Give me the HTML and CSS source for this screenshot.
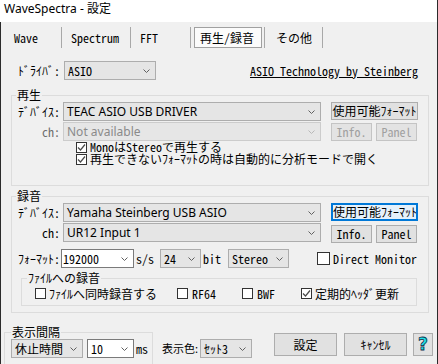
FILE: index.html
```html
<!DOCTYPE html>
<html lang="ja">
<head>
<meta charset="utf-8">
<title>WaveSpectra - 設定</title>
<link rel="stylesheet" href="styles.css">
</head>
<body>
<div class="titlebar">WaveSpectra - 設定</div>
<div class="main">
  <div class="tabs">
    <span class="tab t-wave">Wave</span><span class="sep"></span>
    <span class="tab t-spec">Spectrum</span><span class="sep"></span>
    <span class="tab t-fft">FFT</span><span class="sep"></span>
    <span class="tab t-rec">再生/録音</span><span class="sep s4"></span>
    <span class="tab t-etc">その他</span><span class="sep"></span>
  </div>

  <div class="row driver">
    <span class="drv-lbl">ﾄﾞﾗｲﾊﾞ:</span>
    <div class="select w-drv"><span class="val mono">ASIO</span><svg class="chev" width="7" height="4" viewBox="0 0 7 4"><polyline points="0.5,0.5 3.5,3.5 6.5,0.5"/></svg></div>
    <a class="asio">ASIO Technology by Steinberg</a>
  </div>

  <fieldset class="group g-play">
    <legend>再生</legend>
    <div class="row r1">
      <span class="lbl">ﾃﾞﾊﾞｲｽ:</span>
      <div class="select w-dev"><span class="val ui">TEAC ASIO USB DRIVER</span><svg class="chev" width="7" height="4" viewBox="0 0 7 4"><polyline points="0.5,0.5 3.5,3.5 6.5,0.5"/></svg></div>
      <span class="btn b-fmt">使用可能ﾌｫｰﾏｯﾄ</span>
    </div>
    <div class="row r2">
      <span class="lbl dim">ch:</span>
      <div class="select w-dev disabled"><span class="val ui">Not available</span><svg class="chev" width="7" height="4" viewBox="0 0 7 4"><polyline points="0.5,0.5 3.5,3.5 6.5,0.5"/></svg></div>
      <span class="btn b-info disabled">Info.</span>
      <span class="btn b-panel disabled">Panel</span>
    </div>
    <div class="crow">
      <span class="cb"><svg width="9" height="9" viewBox="0 0 9 9"><polyline points="1,4.5 3.5,7 8,1.5"/></svg></span><span>MonoはStereoで再生する</span>
    </div>
    <div class="crow">
      <span class="cb"><svg width="9" height="9" viewBox="0 0 9 9"><polyline points="1,4.5 3.5,7 8,1.5"/></svg></span><span>再生できないﾌｫｰﾏｯﾄの時は自動的に分析モードで開く</span>
    </div>
  </fieldset>

  <fieldset class="group g-rec">
    <legend>録音</legend>
    <div class="row r1">
      <span class="lbl">ﾃﾞﾊﾞｲｽ:</span>
      <div class="select w-dev"><span class="val ui">Yamaha Steinberg USB ASIO</span><svg class="chev" width="7" height="4" viewBox="0 0 7 4"><polyline points="0.5,0.5 3.5,3.5 6.5,0.5"/></svg></div>
      <span class="btn b-fmt focus">使用可能ﾌｫｰﾏｯﾄ</span>
    </div>
    <div class="row r2">
      <span class="lbl">ch:</span>
      <div class="select w-dev"><span class="val ui">UR12 Input 1</span><svg class="chev" width="7" height="4" viewBox="0 0 7 4"><polyline points="0.5,0.5 3.5,3.5 6.5,0.5"/></svg></div>
      <span class="btn b-info b-info2">Info.</span>
      <span class="btn b-panel b-info2">Panel</span>
    </div>
    <div class="row r3">
      <span class="lbl fmt-lbl">ﾌｫｰﾏｯﾄ:</span>
      <div class="combo w-rate"><span class="val">192000</span><svg class="chev" width="7" height="4" viewBox="0 0 7 4"><polyline points="0.5,0.5 3.5,3.5 6.5,0.5"/></svg></div>
      <span class="unit">s/s</span>
      <div class="select w-bit"><span class="val">24</span><svg class="chev" width="7" height="4" viewBox="0 0 7 4"><polyline points="0.5,0.5 3.5,3.5 6.5,0.5"/></svg></div>
      <span class="unit">bit</span>
      <div class="select w-ch"><span class="val">Stereo</span><svg class="chev" width="7" height="4" viewBox="0 0 7 4"><polyline points="0.5,0.5 3.5,3.5 6.5,0.5"/></svg></div>
      <span class="cb big dm"></span><span class="dm-txt">Direct Monitor</span>
    </div>
    <fieldset class="group g-file">
      <legend>ﾌｧｲﾙへの録音</legend>
      <div class="frow">
        <span class="cb"></span><span class="ftxt f1">ﾌｧｲﾙへ同時録音する</span>
        <span class="cb"></span><span class="ftxt f2">RF64</span>
        <span class="cb"></span><span class="ftxt f3">BWF</span>
        <span class="cb"><svg width="9" height="9" viewBox="0 0 9 9"><polyline points="1,4.5 3.5,7 8,1.5"/></svg></span><span class="ftxt">定期的ﾍｯﾀﾞ更新</span>
      </div>
    </fieldset>
  </fieldset>

  <div class="bottom">
    <fieldset class="group g-int">
      <legend>表示間隔</legend>
      <div class="irow">
        <div class="select w-pause"><span class="val">休止時間</span><svg class="chev" width="7" height="4" viewBox="0 0 7 4"><polyline points="0.5,0.5 3.5,3.5 6.5,0.5"/></svg></div>
        <div class="combo w-ms"><span class="val">10</span><svg class="chev" width="7" height="4" viewBox="0 0 7 4"><polyline points="0.5,0.5 3.5,3.5 6.5,0.5"/></svg></div>
        <span class="unit">ms</span>
      </div>
    </fieldset>
    <span class="color-lbl">表示色:</span>
    <div class="select w-set"><span class="val">ｾｯﾄ3</span><svg class="chev" width="7" height="4" viewBox="0 0 7 4"><polyline points="0.5,0.5 3.5,3.5 6.5,0.5"/></svg></div>
    <span class="btn big-btn b-ok">設定</span>
    <span class="btn big-btn b-cancel">ｷｬﾝｾﾙ</span>
    <span class="btn big-btn b-help"><span class="q">?</span></span>
  </div>
</div>
</body>
</html>
```

FILE: styles.css
```css
* { box-sizing: border-box; margin: 0; padding: 0; }

html, body {
  width: 438px;
  height: 364px;
  overflow: hidden;
}

body {
  background: #f0f0f0;
  color: #000;
  font-family: "Noto Sans Mono CJK JP", "Noto Sans CJK JP", "Liberation Mono", monospace;
  font-size: 12px;
  line-height: 14px;
}

.mono { font-family: "Noto Sans Mono CJK JP", "Noto Sans CJK JP", "Liberation Mono", monospace; }
.ui { font-family: "Noto Sans", "Noto Sans CJK JP", sans-serif; }

.titlebar {
  height: 22px;
  background: #fff;
  border-right: 1px solid #2b2b2b;
  padding-left: 4px;
  font-family: "Noto Sans", "Noto Sans CJK JP", sans-serif;
  font-size: 12px;
  line-height: 18px;
}

.main {
  height: 342px;
  overflow: hidden;
  border-left: 1px solid #2b2b2b;
  border-right: 1px solid #2b2b2b;
}

/* tabs */
.tabs {
  display: flex;
  align-items: center;
  height: 21px;
  margin-top: 5px;
}
.tab {
  display: block;
  height: 21px;
  line-height: 21px;
  white-space: nowrap;
}
.t-wave { margin-left: 13px; width: 47px; }
.t-spec { padding-left: 9px; width: 68px; }
.t-fft { padding-left: 9px; width: 59px; }
.t-rec {
  margin-left: 3px;
  width: 68px;
  padding-left: 5px;
  background: #fbfbfb;
  border: 1px solid #a0a0a0;
  line-height: 19px;
}
.t-etc { padding-left: 11px; width: 57px; }
.sep {
  display: block;
  width: 1px;
  height: 21px;
  background: #a8a8a8;
}
.s4 { margin-left: 2px; }

/* rows */
.row {
  display: flex;
  align-items: flex-start;
}
.driver {
  margin-top: 13px;
  height: 19px;
  padding-left: 17px;
  padding-right: 19px;
  align-items: center;
}
.drv-lbl { width: 46px; white-space: nowrap; }
.asio {
  margin-left: auto;
  text-decoration: underline;
  color: #000;
  white-space: nowrap;
}

/* select / combo */
.select, .combo {
  display: flex;
  align-items: center;
  height: 19px;
  border: 1px solid #adadad;
  background: #e5e5e5;
  padding-left: 3px;
  padding-right: 5px;
  white-space: nowrap;
}
.combo {
  background: #fff;
  border-color: #7a7a7a;
  padding-left: 1px;
}
.select .val, .combo .val { flex: 1; }
.chev { flex: none; }
.chev polyline { fill: none; stroke: #606060; stroke-width: 1; }
.select.disabled { background: #e6e6e6; border-color: #cccccc; color: #8a8a8a; }
.select.disabled .chev polyline { stroke: #b8b8b8; }

.w-drv { width: 92px; }
.w-dev { width: 258px; margin-left: 3px; }
.w-rate { width: 73px; margin-left: 1px; }
.w-bit { width: 41px; margin-left: 6px; }
.w-ch { width: 61px; margin-left: 7px; }
.w-pause { width: 72px; }
.w-ms { width: 47px; margin-left: 4px; padding-left: 3px; }
.w-set { width: 52px; margin-left: 2px; margin-top: 14px; }

/* buttons */
.btn {
  display: block;
  height: 18px;
  line-height: 16px;
  border: 1px solid #adadad;
  background: #e1e1e1;
  text-align: center;
  white-space: nowrap;
}
.btn.disabled { background: #e3e3e3; border-color: #c4c4c4; color: #a0a0a0; }
.btn.focus { border: 2px solid #0078d7; background: #e5f1fb; line-height: 14px; }
.b-fmt { width: 87px; margin-left: 10px; }
.b-info { width: 41px; margin-left: 10px; margin-top: 1px; }
.b-panel { width: 41px; margin-left: 4px; margin-top: 1px; }
.b-info2 { margin-top: 2px; }

/* group boxes */
.group {
  border: 1px solid #dcdcdc;
  padding: 0;
  min-width: 0;
}
.group legend {
  font-family: "Noto Sans CJK JP", sans-serif;
  font-size: 12px;
  line-height: 14px;
  padding: 0 1px;
  white-space: nowrap;
}
.g-play {
  margin: 8px 0 0 10px;
  width: 418px;
  padding-bottom: 20px;
}
.g-play legend, .g-rec legend { margin-left: 4px; }
.g-rec {
  margin: 3px 0 0 10px;
  width: 418px;
  padding-bottom: 6px;
}
.lbl { width: 48px; text-align: right; line-height: 19px; white-space: nowrap; }
.dim { color: #6d6d6d; }
.r1 { height: 20px; }
.r2 { height: 19px; }
.r3 { height: 19px; margin-top: 7px; align-items: center; }
.fmt-lbl { width: 48px; }
.unit { margin-left: 2px; white-space: nowrap; }
.dm-txt { white-space: nowrap; }

.crow {
  display: flex;
  align-items: center;
  height: 12px;
  line-height: 12px;
  padding-left: 64px;
  white-space: nowrap;
}
.cb {
  display: flex;
  align-items: center;
  justify-content: center;
  flex: none;
  width: 11px;
  height: 11px;
  border: 1px solid #333;
  background: #fff;
  margin-right: 3px;
}
.cb polyline { fill: none; stroke: #4a4a4a; stroke-width: 1.2; }
.cb.big { width: 13px; height: 13px; }
.dm { margin-left: 28px; }

.g-file {
  margin: 3px 0 0 9px;
  width: 396px;
  padding-bottom: 5px;
}
.g-file legend { margin-left: 5px; }
.frow {
  display: flex;
  align-items: center;
  height: 13px;
  line-height: 13px;
  margin-top: 2px;
  padding-left: 13px;
}
.ftxt { white-space: nowrap; }
.f1 { width: 107px; margin-right: 21px; }
.f2 { width: 24px; margin-left: 1px; margin-right: 26px; }
.f3 { width: 19px; margin-left: 1px; margin-right: 25px; }

/* bottom */
.bottom {
  display: flex;
  align-items: flex-start;
  margin-top: 12px;
}
.g-int {
  margin-left: 3px;
  width: 149px;
  height: 40px;
  flex: none;
}
.g-int legend { margin-left: 6px; }
.irow {
  display: flex;
  align-items: center;
  padding-left: 6px;
}
.color-lbl {
  margin-left: 9px;
  margin-top: 14px;
  width: 36px;
  line-height: 19px;
  white-space: nowrap;
  font-family: "Noto Sans CJK JP", sans-serif;
  font-size: 11px;
}
.big-btn { height: 23px; line-height: 21px; margin-top: 8px; }
.b-ok { width: 63px; margin-left: 22px; }
.b-cancel { width: 63px; margin-left: 7px; }
.b-help { width: 20px; margin-left: 6px; }
.q {
  font-family: "DejaVu Sans", sans-serif;
  font-weight: bold;
  font-size: 17px;
  color: #1fe0e8;
  -webkit-text-stroke: 0.8px #10304a;
  line-height: 21px;
}
```
